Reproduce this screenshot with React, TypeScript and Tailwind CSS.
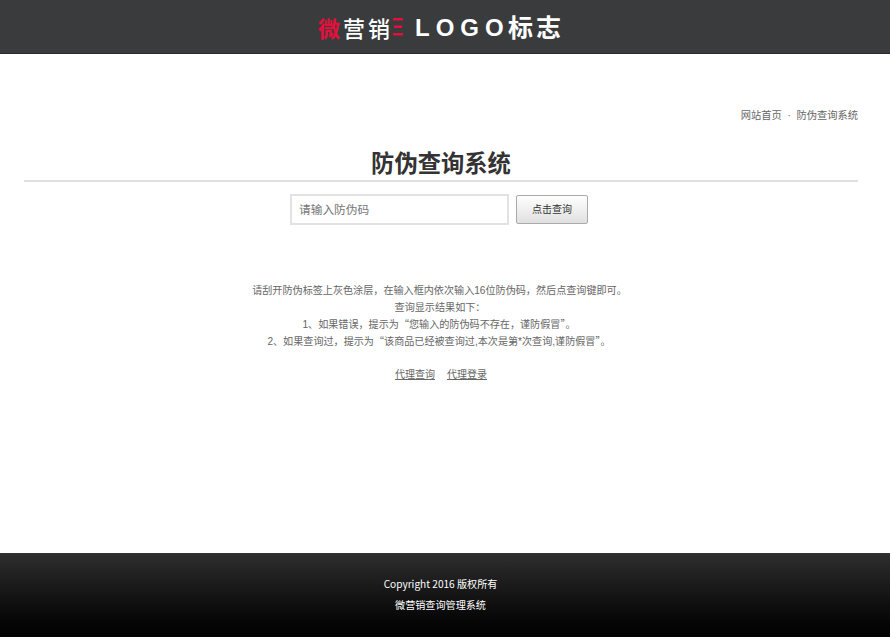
const Quoted = ({ children }: { children: string }) => (
  <span className="font-['Noto_Sans_CJK_SC',sans-serif] leading-none">{children}</span>
);

export default function App() {
  return (
    <div className="flex h-[637px] flex-col bg-white font-['Liberation_Sans','Noto_Sans_CJK_SC',sans-serif] text-[10.25px] text-[#666]">
      <header className="flex h-[54px] items-center justify-center border-b border-[#2b2b2b] bg-[#3a3b3d] pr-[8px]">
        <div className="flex items-center whitespace-nowrap font-['Noto_Sans_CJK_SC',sans-serif] leading-none text-white">
          <span className="text-[22px] font-bold text-[#e60f3c]">微</span>
          <span className="ml-[3px] text-[22px] font-medium">营</span>
          <span className="ml-[3px] text-[22px] font-medium">销</span>
          <svg width="10" height="18" viewBox="0 0 10 18" className="ml-[3px]" aria-hidden="true">
            <rect x="0" y="0" width="10" height="2.5" fill="#e60f3c" />
            <rect x="1" y="7.5" width="8" height="2.5" fill="#e60f3c" />
            <rect x="0" y="15" width="10" height="2.5" fill="#e60f3c" />
          </svg>
          <span className="ml-[12px] mt-[3px] w-[93px] font-['Liberation_Sans',sans-serif] text-[24px] font-bold tracking-[6px]">LOGO</span>
          <span className="text-[25px] font-bold tracking-[3px]">标志</span>
        </div>
      </header>
      <main className="flex-1 pl-6 pr-8">
        <div className="mt-[54px] text-right leading-[16px]">网站首页&nbsp;&nbsp;·&nbsp;&nbsp;防伪查询系统</div>
        <h1 className="mt-[18px] h-[40px] border-b-2 border-[#e0e0e0] text-center text-[23.3px] font-bold leading-[44px] text-[#333]">防伪查询系统</h1>
        <div className="mt-[12px] flex justify-center gap-[7px] pr-[4px]">
          <div className="flex h-[31px] w-[219px] items-center border-2 border-[#e2e2e2] px-[7px] text-[11.7px] text-[#777]">请输入防伪码</div>
          <button className="mt-[1px] h-[29px] w-[72px] rounded-[2px] border border-[#aaa] bg-gradient-to-b from-white to-[#e0e0e0] text-[10px] text-[#333]">点击查询</button>
        </div>
        <div className="mt-[57px] text-center text-[10.1px] leading-[17px]">
          <p className="h-[17px] pr-[3px]">请刮开防伪标签上灰色涂层，在输入框内依次输入16位防伪码，然后点查询键即可。</p>
          <p className="h-[17px] pr-[2px]">查询显示结果如下：</p>
          <p className="h-[17px] pr-[4px]">1、如果错误，提示为<Quoted>“</Quoted>您输入的防伪码不存在，谨防假冒<Quoted>”</Quoted>。</p>
          <p className="h-[17px] pr-[4px]">2、如果查询过，提示为<Quoted>“</Quoted>该商品已经被查询过,本次是第*次查询,谨防假冒<Quoted>”</Quoted>。</p>
          <p className="mt-[16px] flex justify-center gap-3 text-[10px]">
            <a className="underline">代理查询</a>
            <a className="underline">代理登录</a>
          </p>
        </div>
      </main>
      <footer className="h-[84px] border-t border-[#333] bg-gradient-to-b from-[#2e2e2e] to-[#020202] pr-[9px] pt-[19px] text-center font-['Noto_Sans_CJK_SC',sans-serif] text-[10.1px] font-normal leading-[21px] text-white">
        <p>Copyright 2016 版权所有</p>
        <p>微营销查询管理系统</p>
      </footer>
    </div>
  );
}
